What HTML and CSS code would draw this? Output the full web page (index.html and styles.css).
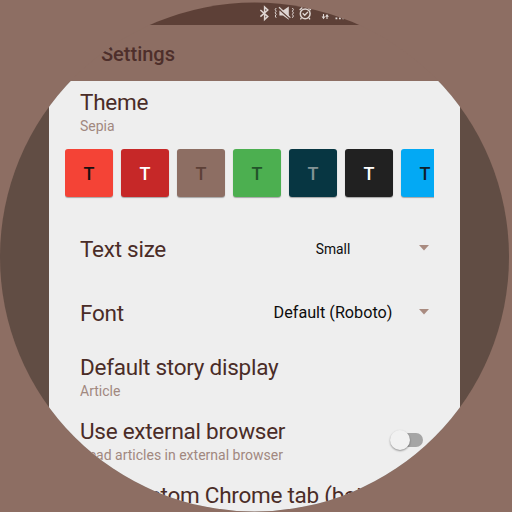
FILE: index.html
```html
<!DOCTYPE html>
<html lang="en">
<head>
<meta charset="utf-8">
<title>Settings</title>
<link rel="stylesheet" href="styles.css">
</head>
<body>
<div class="lens">
  <header class="status">
    <svg class="status-icons" width="100" height="25" viewBox="0 0 100 25" fill="none" stroke="#ded5d2" stroke-width="1.5">
      <path d="M4.4 10l7.4 6.6-3.2 3V7l3.2 3-7.4 6.6"/>
      <path d="M20.2 8l-1 1.6 1 1.6-1 1.6 1 1.6-1 1.6 1 1.8M36.4 8l1 1.6-1 1.6 1 1.6-1 1.6 1 1.6-1 1.8" stroke-width="1"/>
      <path d="M23.4 10.4H27l5.8-4v13.4l-5.8-4.2h-3.6z" fill="#ded5d2" stroke="none"/>
      <path d="M22 8.2l12 10.8" stroke="#5d4037" stroke-width="1.2"/>
      <path d="M23 7.2l11.4 10.4" stroke-width="1.2"/>
      <circle cx="49.2" cy="13.8" r="4.9"/>
      <path d="M46.7 13.3l2 2 3.2-3.3M43.6 10l2.8-2.5M54.9 10L52 7.5M45.4 18l-1 1.3M53 18l1 1.3" stroke-width="1.3"/>
      <path d="M67.5 14v4.5M71 19v-4" stroke-width="1.1"/>
      <path d="M65.6 16.5h3.8l-1.9 2.8zM69.1 16.8h3.8L71 14zM79.5 17.6h1.8v1.7h-1.8zM83 17.6h1.8v1.7H83zM86.5 17.6h1.2v1.7h-1.2z" fill="#ded5d2" stroke="none"/>
    </svg>
  </header>
  <div class="appbar">Settings</div>
  <div class="backdrop">
    <main class="panel">
      <section class="row theme">
        <div class="title">Theme</div>
        <div class="summary">Sepia</div>
      </section>
      <div class="swatches">
        <div class="swatch red">T</div>
        <div class="swatch crimson">T</div>
        <div class="swatch sepia">T</div>
        <div class="swatch green">T</div>
        <div class="swatch solarized">T</div>
        <div class="swatch dark">T</div>
        <div class="swatch blue">T</div>
      </div>
      <section class="row select first">
        <div class="title">Text size</div>
        <div class="value small">Small</div>
        <svg class="caret" width="10" height="6" viewBox="0 0 10 6"><path d="M0 0h10L5 5.4z" fill="#a98b80"/></svg>
      </section>
      <section class="row select">
        <div class="title">Font</div>
        <div class="value">Default (Roboto)</div>
        <svg class="caret" width="10" height="6" viewBox="0 0 10 6"><path d="M0 0h10L5 5.4z" fill="#a98b80"/></svg>
      </section>
      <section class="row">
        <div class="title">Default story display</div>
        <div class="summary">Article</div>
      </section>
      <section class="row toggle">
        <div>
          <div class="title">Use external browser</div>
          <div class="summary">Read articles in external browser</div>
        </div>
        <div class="switch"><span class="knob"></span></div>
      </section>
      <section class="row">
        <div class="title">Use Custom Chrome tab (beta)</div>
      </section>
    </main>
  </div>
</div>
</body>
</html>
```
FILE: styles.css
```css
* { box-sizing: border-box; }
body {
  margin: 0;
  width: 512px;
  height: 512px;
  overflow: hidden;
  background: #8d6e63;
  font-family: Roboto, "Liberation Sans", sans-serif;
}
.lens {
  height: 512px;
  overflow: hidden;
  background: #8d6e63;
  clip-path: circle(254.5px at 254.5px 257px);
}
.status {
  height: 25px;
  padding-left: 256px;
  background: #5d4037;
}
.status-icons { display: block; }
.appbar {
  height: 56px;
  padding-left: 101px;
  font-size: 20px;
  font-weight: 500;
  line-height: 58px;
  color: #4e2f2b;
}
.backdrop {
  height: 431px;
  padding: 0 52px 0 49px;
  background: #614d44;
}
.panel {
  height: 431px;
  overflow: hidden;
  background: #eee;
}
.row {
  height: 64px;
  padding: 7px 31px 0;
  white-space: nowrap;
}
.row.theme {
  height: 66px;
  padding-top: 6px;
}
.title {
  font-size: 22.5px;
  line-height: 30px;
  letter-spacing: -.26px;
  color: #4a2c27;
}
.summary {
  font-size: 14px;
  line-height: 18px;
  color: #a1887f;
}
.swatches {
  display: flex;
  gap: 8px;
  height: 53px;
  margin: 0 26px 0 16px;
  padding-top: 2px;
  overflow: hidden;
}
.swatch {
  flex: none;
  width: 48px;
  height: 48px;
  border-radius: 3px;
  box-shadow: 0 1px 1px rgba(0, 0, 0, .3);
  font-size: 18px;
  font-weight: 500;
  line-height: 50px;
  text-align: center;
}
.red { background: #f44336; color: #171010; }
.crimson { background: #c62828; color: #fff; }
.sepia { background: #8d6e63; color: #5d4037; }
.green { background: #4caf50; color: #22542a; }
.solarized { background: #073642; color: #839496; }
.dark { background: #212121; color: #fff; }
.blue { background: #03a9f4; color: #10202a; }
.row.select {
  display: grid;
  grid-template-columns: 189px 1fr 37px;
  align-items: center;
  padding: 0 26px 0 31px;
}
.row.select.first { margin-top: 17px; }
.value {
  font-size: 16.2px;
  line-height: 30px;
  color: #0c0c0c;
  text-align: center;
}
.value.small { font-size: 13.8px; }
.caret { justify-self: end; margin: 0 5px 2px 0; }
.toggle {
  display: flex;
  justify-content: space-between;
}
.switch {
  position: relative;
  width: 28px;
  height: 14px;
  margin: 17px 6px 0 0;
  border-radius: 7px;
  background: #a5a5a5;
}
.knob {
  position: absolute;
  left: -5px;
  top: -3px;
  width: 20px;
  height: 20px;
  border-radius: 50%;
  background: #f1f1f1;
  box-shadow: 0 1px 2px rgba(0, 0, 0, .4);
}
```
